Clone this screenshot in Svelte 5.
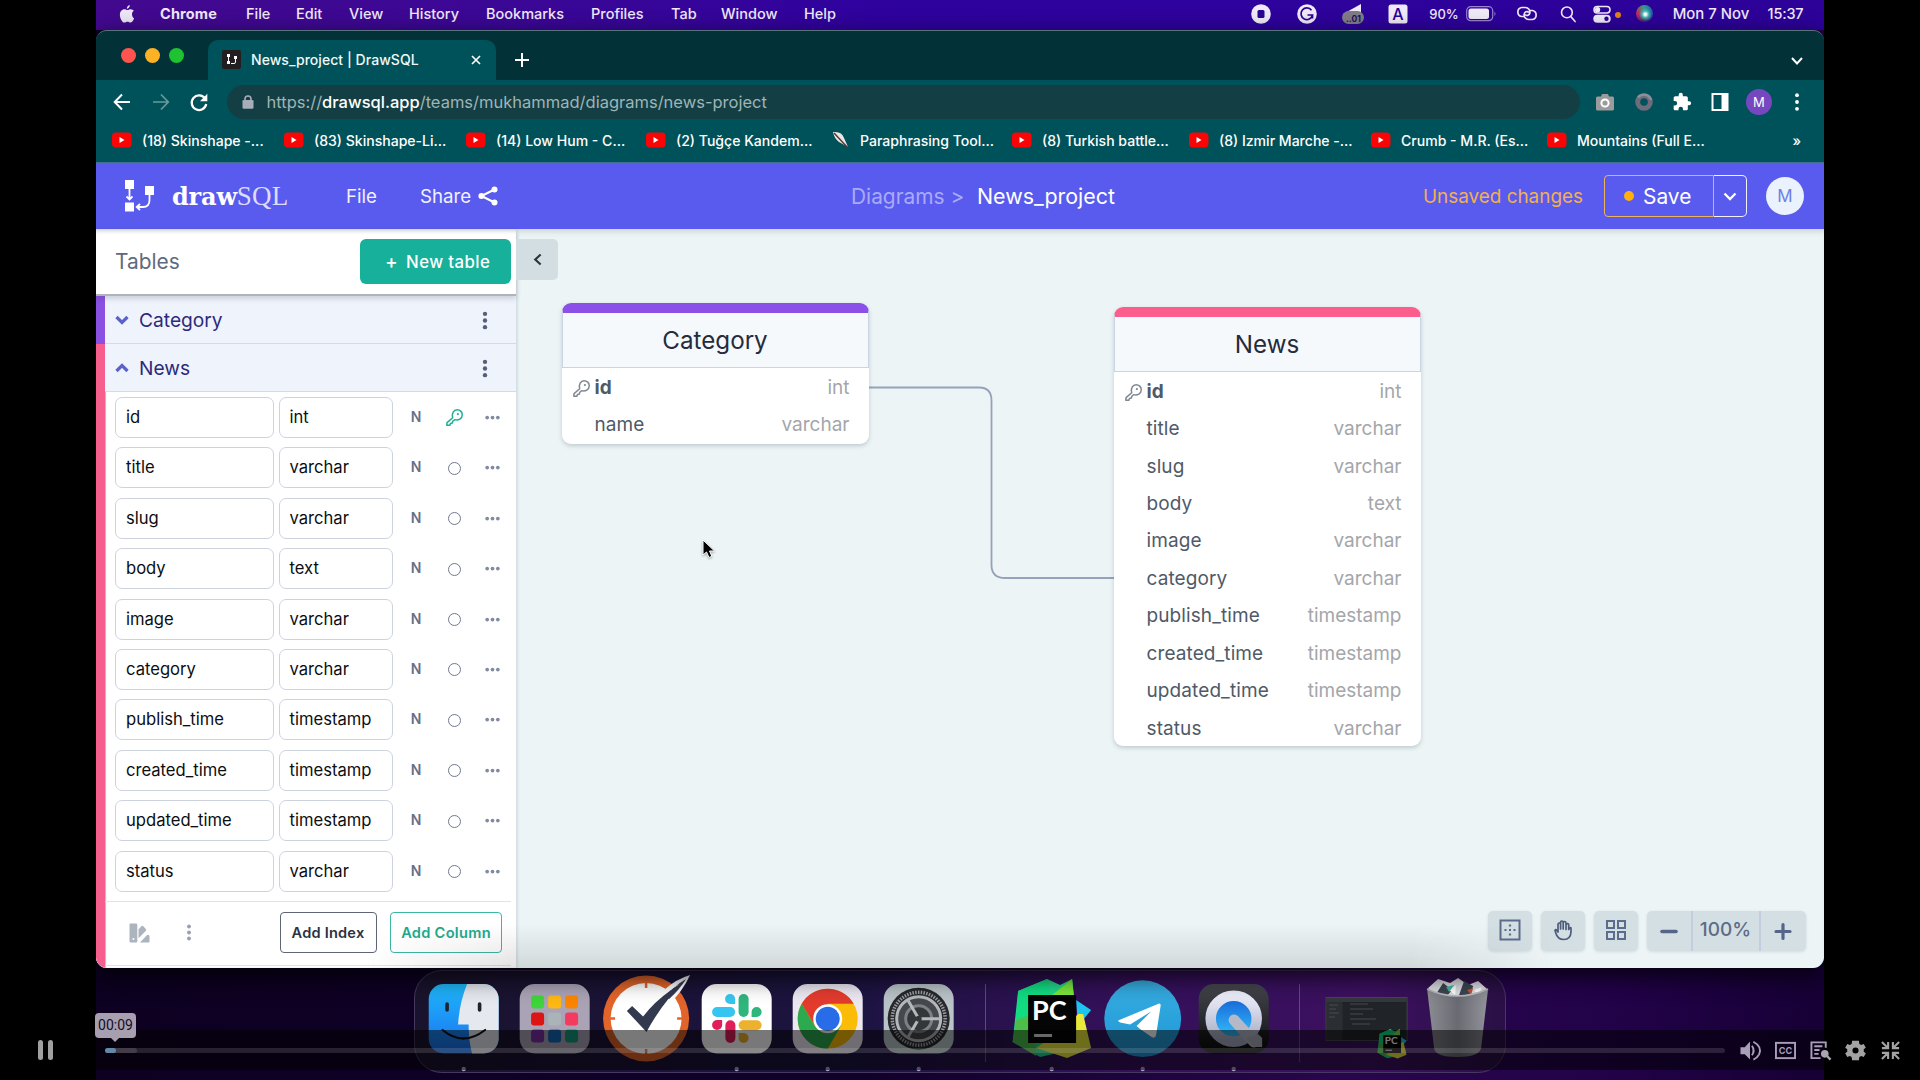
<script>
  const menus = [
    ['File', 50], ['Edit', 53], ['View', 60], ['History', 77], ['Bookmarks', 105],
    ['Profiles', 80], ['Tab', 50], ['Window', 83], ['Help', 50]
  ];

  const bookmarks = [
    { text: '(18) Skinshape -...', w: 172 },
    { text: '(83) Skinshape-Li...', w: 182 },
    { text: '(14) Low Hum - C...', w: 180 },
    { text: '(2) Tuğçe Kandem...', w: 184 },
    { text: 'Paraphrasing Tool...', w: 182, feather: true },
    { text: '(8) Turkish battle...', w: 177 },
    { text: '(8) Izmir Marche -...', w: 182 },
    { text: 'Crumb - M.R. (Es...', w: 176 },
    { text: 'Mountains (Full E...', w: 180 }
  ];

  const newsColumns = [
    { name: 'id', type: 'int', key: true },
    { name: 'title', type: 'varchar' },
    { name: 'slug', type: 'varchar' },
    { name: 'body', type: 'text' },
    { name: 'image', type: 'varchar' },
    { name: 'category', type: 'varchar' },
    { name: 'publish_time', type: 'timestamp' },
    { name: 'created_time', type: 'timestamp' },
    { name: 'updated_time', type: 'timestamp' },
    { name: 'status', type: 'varchar' }
  ];

  const diagramTables = [
    {
      title: 'Category', kind: 'purple',
      columns: [{ name: 'id', type: 'int', key: true }, { name: 'name', type: 'varchar' }]
    },
    { title: 'News', kind: 'pink', columns: newsColumns }
  ];

  const ticks = Array.from({ length: 60 }, (_, i) => i * 6);
  const pads = ['#3fd43c', '#fdb813', '#fb8500', '#dc1414', '#a9b3b8', '#f43b5e', '#7b2fa8', '#1467b8', '#159a7c'];
</script>

{#snippet key()}
  <svg class="key" viewBox="0 0 16 16" fill="none" stroke="currentColor" stroke-width="1.4" stroke-linejoin="round">
    <path d="M6.300 8.200 1 12.800 .7 15.200 3.600 15.300 4.200 13.600 6 13.200 6.400 11.500 8.300 10C11.500 11 15.300 9 15.300 5.400 15.300 2.700 13 .7 10.500.7 7.200.7 5.200 4.400 6.300 8.200Z" />
    <circle cx="11.200" cy="4.800" r="1" fill="currentColor" stroke="none" />
  </svg>
{/snippet}

{#snippet dots()}
  <svg class="vdots" viewBox="0 0 6 20" fill="currentColor">
    <circle cx="3" cy="3" r="2.3" /><circle cx="3" cy="10" r="2.3" /><circle cx="3" cy="17" r="2.3" />
  </svg>
{/snippet}

{#snippet pycharm()}
  <path d="M12 21 41 9 54 15 66 9 70 44 56 82 34 87 6.500 72Z" fill="#21d789" />
  <path d="M12 21 41 9 46 30 10 62Z" fill="#12dc82" />
  <path d="M46 25 66 9 70 50 54 40Z" fill="#7be83c" />
  <path d="M6.500 72 10 50 26 44 30 86Z" fill="#4cbf4b" />
  <path d="M70 30 85 40 72 56Z" fill="#1cc4ee" />
  <path d="M72 44 77 44 85 78 61 88 30 78 56 60Z" fill="#e9e83c" />
  <rect x="22" y="25" width="48" height="48" fill="#050505" />
  <text x="26" y="49.500" class="pc">PC</text>
  <rect x="28" y="64" width="18" height="3" fill="#ddd" />
{/snippet}

<div class="stage">
  <div class="screen">
    <div class="menubar">
      <svg class="apple" viewBox="0 0 16 19" fill="#ece6f6">
        <path d="M11 0C11 2 9.600 3.900 7.800 4 7.700 2 9.200.4 11 0ZM13.300 9.800C13.300 8 14.200 6.900 15.300 6.200 14.500 5 13.300 4.500 12 4.400 10.600 4.300 9.400 5.200 8.500 5.200 7.700 5.200 6.600 4.400 5.400 4.400 2.500 4.400.5 6.800.5 10.200.5 14.200 3 18.500 5.200 18.500 6.400 18.500 7 17.700 8.500 17.700 10 17.700 10.500 18.500 11.800 18.500 13.600 18.500 15 15.700 15.500 14 14.200 13.400 13.300 11.800 13.300 9.800Z" />
      </svg>
      <b class="appname">Chrome</b>
      {#each menus as [label, width]}
        <span style:width="{width}px">{label}</span>
      {/each}
      <div class="status">
        <svg viewBox="0 0 20 20"><circle cx="10" cy="10" r="9.800" fill="#efe9f8" /><rect x="6.500" y="6" width="7" height="8" rx="1.500" fill="#2a0296" /></svg>
        <svg viewBox="0 0 20 20"><circle cx="10" cy="10" r="9.800" fill="#efe9f8" /><path d="M14.500 6.300A5.800 5.800 0 1 0 15.500 11H10.500M15.500 11V14.500" fill="none" stroke="#2a0296" stroke-width="1.700" /></svg>
        <svg viewBox="0 0 22 22"><path d="M1 10 19 0V10Z" fill="#efe9f8" /><rect x="0" y="7" width="22" height="13" rx="6.500" fill="#7f7c86" /><text x="4" y="17.500" class="mini">..01</text></svg>
        <svg viewBox="0 0 20 20"><rect x=".5" y=".5" width="19" height="19" rx="2.500" fill="#efe9f8" /><text x="10" y="16" class="langa">A</text></svg>
        <span class="pct">90%</span>
        <svg viewBox="0 0 31 16"><rect x=".7" y=".7" width="26" height="14" rx="4" fill="none" stroke="#9a83d2" stroke-width="1.200" /><rect x="2.500" y="2.500" width="20.500" height="10.500" rx="2.500" fill="#efe9f8" /><path d="M28.500 5.500Q30.500 7.800 28.500 10Z" fill="#9a83d2" /></svg>
        <svg viewBox="0 0 22 14" fill="none" stroke="#efe9f8" stroke-width="1.700"><path d="M9 10H5.500A4.600 4.600 0 0 1 5.500 1H9.500A4.600 4.600 0 0 1 13.800 6.500C13.500 8.500 11 10 9 8" /><path d="M13 4H16.500A4.600 4.600 0 0 1 16.500 13H12.500A4.600 4.600 0 0 1 8.200 7.500C8.500 5.500 11 4 13 6" /></svg>
        <svg viewBox="0 0 18 18" fill="none" stroke="#efe9f8" stroke-width="1.700"><circle cx="7.300" cy="7.300" r="5.700" /><path d="M11.500 11.800 16 17" stroke-linecap="round" /></svg>
        <svg viewBox="0 0 18 18"><rect x="1" y="1.500" width="16" height="6.500" rx="3.200" fill="none" stroke="#efe9f8" stroke-width="1.500" /><circle cx="4.600" cy="4.700" r="2.600" fill="#efe9f8" /><rect x=".3" y="9.800" width="17.400" height="8" rx="4" fill="#efe9f8" /><circle cx="13.500" cy="13.800" r="2.200" fill="#2a0296" /></svg>
        <i class="amber"></i>
        <i class="siri"></i>
        <span class="date">Mon 7 Nov</span>
        <span class="clock">15:37</span>
      </div>
    </div>

    <div class="window">
      <div class="tabs">
        <div class="lights"><i></i><i></i><i></i></div>
        <div class="tab">
          <svg class="fav" viewBox="0 0 19 19"><rect width="19" height="19" rx="2" fill="#231f20" /><path d="M5 4h3v3H5zM5 11h3v3H5zM12 6h3v3h-3z" fill="#fff" /><path d="M6.500 7v4M13.500 9v3q0 1.500-1.500 1.500H9" stroke="#fff" fill="none" /></svg>
          <span class="tabtitle">News_project | DrawSQL</span>
          <svg class="x" viewBox="0 0 10 10"><path d="M1 1 9 9M9 1 1 9" stroke="#fff" stroke-width="1.700" /></svg>
        </div>
        <svg class="plus" viewBox="0 0 14 14"><path d="M7 0V14M0 7H14" stroke="#fff" stroke-width="2" /></svg>
        <svg class="down" viewBox="0 0 12 8"><path d="M1 1 6 6.500 11 1" stroke="#fff" stroke-width="2" fill="none" /></svg>
      </div>

      <div class="toolbar">
        <svg viewBox="0 0 18 18" fill="none" stroke="#fff" stroke-width="2"><path d="M17 9H2M9 1.500 1.700 9 9 16.500" /></svg>
        <svg viewBox="0 0 18 18" fill="none" stroke="#6b999c" stroke-width="1.700"><path d="M1 9H16M9 1.500 16.300 9 9 16.500" /></svg>
        <svg viewBox="0 0 18 18"><path d="M15 5.500A7.300 7.300 0 1 0 16.200 11" fill="none" stroke="#fff" stroke-width="2.200" /><path d="M17.300.8V8.200H10Z" fill="#fff" /></svg>
        <div class="address">
          <svg viewBox="0 0 12 14"><rect x=".5" y="5" width="11" height="8.800" rx="1.300" fill="#a7adb9" /><path d="M3 6V4A3 3 0 0 1 9 4V6" fill="none" stroke="#a7adb9" stroke-width="1.600" /></svg>
          <span>https://<b>drawsql.app</b>/teams/mukhammad/diagrams/news-project</span>
        </div>
        <div class="ext">
          <svg viewBox="0 0 18 18"><path d="M6 1H12L13 3.500H16.500Q18 3.500 18 5V16Q18 17.500 16.500 17.500H1.500Q0 17.500 0 16V5Q0 3.500 1.500 3.500H5Z" fill="#9b9b9b" /><circle cx="9" cy="10" r="3.600" fill="none" stroke="#fff" stroke-width="2" /></svg>
          <svg viewBox="0 0 18 18"><circle cx="9" cy="9" r="6.300" fill="none" stroke="#6c6c7b" stroke-width="5" /><path d="M3 4.500A7.500 7.500 0 0 1 16 7" fill="none" stroke="#8d8d9b" stroke-width="2.500" /></svg>
          <svg viewBox="0 0 24 24" fill="#fff"><path d="M20.500 11H19V7c0-1.100-.9-2-2-2h-4V3.500a2.500 2.500 0 0 0-5 0V5H4c-1.100 0-2 .9-2 2v3.800h1.500a2.700 2.700 0 0 1 0 5.400H2V20c0 1.100.9 2 2 2h3.800v-1.500a2.700 2.700 0 0 1 5.400 0V22H17c1.100 0 2-.9 2-2v-4h1.500a2.500 2.500 0 0 0 0-5z" /></svg>
          <svg viewBox="0 0 18 18"><rect x="1.500" y="1" width="15" height="16" fill="none" stroke="#fff" stroke-width="2" /><rect x="10.500" y="1" width="6" height="16" fill="#fff" /></svg>
          <span class="me">M</span>
          <svg viewBox="0 0 18 18" fill="#fff"><circle cx="9" cy="2.200" r="1.900" /><circle cx="9" cy="9" r="1.900" /><circle cx="9" cy="15.800" r="1.900" /></svg>
        </div>
      </div>

      <div class="bookmarks">
        {#each bookmarks as b}
          <div class="bm" style:width="{b.w}px">
            {#if b.feather}
              <svg viewBox="0 0 20 16"><path d="M3 0Q12-1 14 6L18 15 9 10Q4 6 3 0Z" fill="#efe5e2" /><path d="M4 1 18 16" stroke="#4b3436" stroke-width="1.400" /></svg>
            {:else}
              <svg viewBox="0 0 20 16"><rect y=".5" width="19.500" height="15" rx="4" fill="#f90505" /><path d="M7.500 5 12.500 8 7.500 11Z" fill="#fff" /></svg>
            {/if}
            <span>{b.text}</span>
          </div>
        {/each}
        <span class="more">»</span>
      </div>

      <header>
        <svg class="logo" viewBox="0 0 32 34"><path d="M1 1H10V10H1ZM1 23.500H10V32.500H1ZM21 7H30V16H21Z" fill="#fff" /><path d="M5.500 10V21M2.500 17.500 5.500 20.500 8.500 17.500M25.500 16V21Q25.500 28 19 28H13M16 25 12.700 28 16 31" fill="none" stroke="#fff" stroke-width="1.800" /></svg>
        <div class="brand"><b>draw</b><span>SQL</span></div>
        <span class="hfile">File</span>
        <span class="hshare">Share</span>
        <svg class="share" viewBox="0 0 20 20" fill="#fff"><path d="M16.500 3.500 3.500 10 16.500 16.500" fill="none" stroke="#fff" stroke-width="2.200" /><circle cx="16.500" cy="3.400" r="3" /><circle cx="3.400" cy="10" r="3" /><circle cx="16.500" cy="16.600" r="3" /></svg>
        <span class="crumb">Diagrams &gt;</span>
        <span class="project">News_project</span>
        <span class="unsaved">Unsaved changes</span>
        <div class="save"><i></i><span>Save</span></div>
        <div class="savemore"><svg viewBox="0 0 14 9"><path d="M1.500 1.500 7 7 12.500 1.500" fill="none" stroke="#fff" stroke-width="2.300" /></svg></div>
        <span class="avatar">M</span>
      </header>

      <main>
        <aside>
          <div class="sidehead"><span>Tables</span><button><i>+</i>New table</button></div>
          <div class="group purple">
            <div class="grouphead">
              <svg class="chev" viewBox="0 0 14 10"><path d="M1.500 2 7 7.500 12.500 2" fill="none" stroke="#5b62c9" stroke-width="3.200" /></svg>
              <span>Category</span>{@render dots()}
            </div>
          </div>
          <div class="group pink">
            <div class="grouphead">
              <svg class="chev" viewBox="0 0 14 10"><path d="M1.500 8 7 2.500 12.500 8" fill="none" stroke="#5b62c9" stroke-width="3.200" /></svg>
              <span>News</span>{@render dots()}
            </div>
            <div class="fields">
              {#each newsColumns as c}
                <div class="field">
                  <span class="box">{c.name}</span>
                  <span class="box">{c.type}</span>
                  <span class="null">N</span>
                  <span class="idx" class:keyed={c.key}>{#if c.key}{@render key()}{:else}<i></i>{/if}</span>
                  <svg class="hdots" viewBox="0 0 16 5" fill="#808ba1"><circle cx="2.300" cy="2.500" r="2" /><circle cx="8" cy="2.500" r="2" /><circle cx="13.700" cy="2.500" r="2" /></svg>
                </div>
              {/each}
            </div>
            <div class="groupfoot">
              <svg class="palette" viewBox="0 0 22 21" fill="#abb4bf"><path d="M1.500.5H7.500Q8.700.5 8.700 1.700V19.300Q8.700 20.500 7.500 20.500H1.700Q.5 20.500.5 19.300V1.700Q.5.5 1.500.5ZM10 6.500 13 3.300Q14 2.500 15 3.500L17.700 6.200Q18.500 7.200 17.700 8.200L10 16ZM11.500 20.500 19 12.500H20.500Q21.500 12.500 21.500 13.700V19.300Q21.500 20.500 20.500 20.500Z" /><circle cx="4.600" cy="16.800" r="1.100" fill="#fff" /></svg>
              {@render dots()}
              <button class="addindex">Add Index</button>
              <button class="addcol">Add Column</button>
            </div>
          </div>
        </aside>

        <div class="canvas">
          <div class="collapse"><svg viewBox="0 0 10 14"><path d="M8.500 1.500 2.500 7 8.500 12.500" fill="none" stroke="#2d3440" stroke-width="2.400" /></svg></div>
          <svg class="link" viewBox="0 0 246 194"><path d="M0 1.500H110Q122.500 1.500 122.500 14.500V179Q122.500 192 136 192H246" fill="none" stroke="#94a2bb" stroke-width="1.800" /></svg>
          {#each diagramTables as t}
            <div class="table {t.kind}">
              <div class="ttitle">{t.title}</div>
              {#each t.columns as c}
                <div class="trow" class:primary={c.key}>
                  <span class="slot">{#if c.key}{@render key()}{/if}</span>
                  <span class="cname">{c.name}</span>
                  <span class="ctype">{c.type}</span>
                </div>
              {/each}
            </div>
          {/each}
          <svg class="cursor" viewBox="0 0 14 20"><path d="M1 1V16L4.500 13 7 18.500 9.800 17.300 7.500 12H12.500Z" fill="#000" stroke="#fff" stroke-width="1" /></svg>
          <div class="tools">
            <span class="tool"><svg viewBox="0 0 22 22" fill="none" stroke="#5c6c8c" stroke-width="2"><rect x="1.500" y="1.500" width="19" height="19" /><path d="M5.500 11H7.500M10 11H12M14.500 11H16.500M11 5.500V7.500M11 14.500V16.500" stroke-width="2.200" /></svg></span>
            <span class="tool"><svg viewBox="0 0 22 22" fill="none" stroke="#4e5d7c" stroke-width="1.700" stroke-linecap="round" stroke-linejoin="round"><path d="M6 13V5.500Q6 4 7.300 4T8.600 5.500V10M8.600 5V3.300Q8.600 2 9.900 2T11.200 3.300V10M11.200 4Q11.500 2.500 12.700 2.500T14 4V10.500M14 6Q14.200 4.600 15.500 4.600T16.700 6.200V10.500L17.500 9Q18.500 8 19 9V13Q18.500 20.500 12 20.500 5.500 20.500 3.800 14L3 11.500Q3.500 10 4.700 11.200L6 13" /></svg></span>
            <span class="tool"><svg viewBox="0 0 22 22" fill="none" stroke="#5c6c8c" stroke-width="2"><path d="M2 2H9V9H2ZM13 2H20V9H13ZM2 13H9V20H2ZM13 13H20V20H13Z" /></svg></span>
            <div class="zoom">
              <svg viewBox="0 0 18 18"><path d="M2 9.500H16" stroke="#55658a" stroke-width="3.600" stroke-linecap="round" /></svg>
              <span>100%</span>
              <svg viewBox="0 0 18 18"><path d="M2 9.500H16M9 2.500V16.500" stroke="#55658a" stroke-width="3.200" stroke-linecap="round" /></svg>
            </div>
          </div>
        </div>
      </main>
      <div class="shade"></div>
    </div>

    <div class="dockarea">
      <div class="dock">
        <svg viewBox="0 0 91 103">
          <defs>
            <linearGradient id="fb" x1="0" y1="0" x2="0" y2="1"><stop offset="0" stop-color="#1fb9fb" /><stop offset="1" stop-color="#1a6ff0" /></linearGradient>
            <linearGradient id="tg" x1="0" y1="0" x2="0" y2="1"><stop offset="0" stop-color="#37aee2" /><stop offset="1" stop-color="#1e96d4" /></linearGradient>
            <linearGradient id="qt" x1="0" y1="0" x2="0" y2="1"><stop offset="0" stop-color="#46484f" /><stop offset="1" stop-color="#0b0b0d" /></linearGradient>
            <linearGradient id="ring" x1="0" y1="0" x2="0" y2="1"><stop offset="0" stop-color="#eceefa" /><stop offset="1" stop-color="#a3a8c0" /></linearGradient>
            <linearGradient id="bin" x1="0" y1="0" x2="1" y2="0"><stop offset="0" stop-color="#8c8c93" /><stop offset=".5" stop-color="#6a6b72" /><stop offset="1" stop-color="#93949b" /></linearGradient>
            <linearGradient id="qb" x1="0" y1="0" x2="0" y2="1"><stop offset="0" stop-color="#1660d8" /><stop offset="1" stop-color="#36c8fc" /></linearGradient>
            <clipPath id="tile"><rect x="10.600" y="14" width="70" height="69.500" rx="15" /></clipPath>
          </defs>
          <g clip-path="url(#tile)">
            <rect x="10" y="14" width="72" height="70" fill="url(#fb)" />
            <path d="M49 14Q41 34 40 54.500H50.500Q50.500 70 54 84H82V14Z" fill="#e6e8f0" />
          </g>
          <path d="M29 34V40M61.500 34V40" stroke="#1c2430" stroke-width="3.600" stroke-linecap="round" />
          <path d="M24.500 60Q45 77 67 60" fill="none" stroke="#101318" stroke-width="2.200" stroke-linecap="round" />
          <circle class="run" cx="45.600" cy="99" r="2.200" />
        </svg>
        <svg viewBox="0 0 91 103">
          <rect x="10.600" y="14" width="70" height="69.500" rx="15" fill="#aaa3b6" />
          {#each pads as p, i}
            <rect x={22 + (i % 3) * 17} y={25.500 + Math.floor(i / 3) * 17} width="13" height="13" rx="3" fill={p} />
          {/each}
        </svg>
        <svg viewBox="0 0 91 103">
          <circle cx="46" cy="48.500" r="43" fill="#e2642a" /><circle cx="46" cy="48.500" r="35.500" fill="#fff" />
          <path d="M46 12V18M46 79V85M10 48.500H15M77 48.500H82" stroke="#e2642a" stroke-width="2.500" />
          <path d="M90 5Q76 9 64 20L70 33Q82 22 90 5Z" fill="#fff" />
          <path d="M69 28Q56 44 46.400 62L26.800 41 32 36 43 46.500Q54 32 71 20Z" fill="#333a50" />
          <path d="M86 9Q72 17 64 28L69 29Q79 20 86 9Z" fill="#333a50" />
          <path d="M73 17 68 21 80 14Z" fill="#fff" />
        </svg>
        <svg viewBox="0 0 91 103">
          <rect x="10.600" y="14" width="70" height="69.500" rx="15" fill="#fff" />
          <g stroke-width="10" stroke-linecap="round">
            <path d="M52.500 29V42" stroke="#2eb67d" /><path d="M65.500 55.200H52.500" stroke="#ecb22e" /><path d="M39.300 68V55.200" stroke="#e01e5a" /><path d="M26 42H39" stroke="#36c5f0" />
          </g>
          <path d="M44 34V29A5 5 0 1 0 39 34Z" fill="#36c5f0" /><path d="M60.500 47H65.500A5 5 0 1 0 60.500 42Z" fill="#2eb67d" /><path d="M47.500 63V68A5 5 0 1 0 52.500 63Z" fill="#ecb22e" /><path d="M31 50H26A5 5 0 1 0 31 55Z" fill="#e01e5a" />
          <circle class="run" cx="45.600" cy="99" r="2.200" />
        </svg>
        <svg viewBox="0 0 91 103">
          <rect x="10.600" y="14" width="70" height="69.500" rx="15" fill="#ece8f2" />
          <circle cx="45.600" cy="48.700" r="30" fill="#fbbc08" />
          <path d="M45.600 48.700 19.600 33.700A30 30 0 0 1 71.600 33.700H45.600Z" fill="#e33b2e" />
          <path d="M19.600 33.700A30 30 0 0 0 45.600 78.700L58.600 56.200 32.600 56.200Z" fill="#2da94f" />
          <path d="M19.600 33.700 34 58 45 40Z" fill="#e33b2e" />
          <path d="M19.600 33.700 32.600 56.200 45.600 63 40 70 20 55Z" fill="#2da94f" />
          <circle cx="45.600" cy="48.700" r="14.500" fill="#fff" /><circle cx="45.600" cy="48.700" r="12" fill="#286ce8" />
          <circle class="run" cx="45.600" cy="99" r="2.200" />
        </svg>
        <svg viewBox="0 0 91 103">
          <rect x="10.600" y="14" width="70" height="69.500" rx="15" fill="#b9c3c8" />
          <circle cx="45.600" cy="48.700" r="31" fill="#26282b" />
          {#each ticks as a}
            <path d="M45.600 20.500V24" stroke="#9a9da1" stroke-width="1.500" transform="rotate({a} 45.600 48.700)" />
          {/each}
          <circle cx="45.600" cy="48.700" r="22" fill="#45484c" stroke="#b4b8bb" stroke-width="3" />
          <circle cx="45.600" cy="48.700" r="13" fill="#34373a" stroke="#7d8185" stroke-width="3" />
          <path d="M45.600 48.700H67M45.600 48.700 35 30.500M45.600 48.700 35 67" stroke="#b4b8bb" stroke-width="3" />
          <circle cx="45.600" cy="48.700" r="3" fill="#34373a" />
          <circle class="run" cx="45.600" cy="99" r="2.200" />
        </svg>
        <i class="sep"></i>
        <svg viewBox="0 0 91 103">{@render pycharm()}<circle class="run" cx="45.600" cy="99" r="2.200" /></svg>
        <svg viewBox="0 0 91 103">
          <circle cx="45.600" cy="48.700" r="38.400" fill="url(#tg)" />
          <path d="M21 50.500 62 33.500Q64 33.500 63.500 36L59 65Q58 69 54.500 67L43 59 39.500 56 54 41.500 33 54.500 23 52.500Q21.500 52 21 50.500Z" fill="#fff" />
          <circle class="run" cx="45.600" cy="99" r="2.200" />
        </svg>
        <svg viewBox="0 0 91 103">
          <rect x="10.600" y="14" width="70" height="69.500" rx="15" fill="url(#qt)" />
          <circle cx="45.600" cy="48.700" r="23" fill="url(#qb)" stroke="url(#ring)" stroke-width="10.500" />
          <path d="M46 50 66 72" stroke="#b5b8c6" stroke-width="11" stroke-linecap="round" /><path d="M58 68 70 64 74 68V77H66Z" fill="#a9acba" />
          <circle class="run" cx="45.600" cy="99" r="2.200" />
        </svg>
        <i class="sep"></i>
        <svg viewBox="0 0 91 103">
          <rect x="5" y="27.500" width="81" height="43" fill="#202327" stroke="#44474c" />
          <rect x="5.500" y="28" width="80" height="4" fill="#34373b" /><rect x="5.500" y="32" width="16" height="38" fill="#2b2e32" />
          <path d="M8 35H17M8 39H15M8 43H18M8 47H14M29 34H47M29 39H52M29 44H42M29 49H55M31 54H49" stroke="#474c53" stroke-width="1" />
          <g transform="translate(54 56) scale(.37)">{@render pycharm()}</g>
        </svg>
        <svg viewBox="0 0 91 103">
          <path d="M16 18 26 9 38 13 46 8 56 15 66 11 75 19 72 28H20Z" fill="#dcdde3" />
          <path d="M24 24 31 13 40 20 34 27ZM47 25 52 11 61 16 58 27Z" fill="#3c4650" /><path d="M37 20 44 15 43 25ZM62 20 70 17 66 26Z" fill="#fff" /><path d="M34 17 42 15 37 22Z" fill="#3fb7a2" /><path d="M55 20 61 18 59 25Z" fill="#c3543a" />
          <path d="M15 19Q45 33 76 19L69 78Q67 87 45 87T22 78Z" fill="url(#bin)" />
          <path d="M15 19Q45 33 76 19" fill="none" stroke="#b7b8bf" stroke-width="1.500" />
        </svg>
      </div>
    </div>
  </div>

  <div class="player">
    <div class="pause"><i></i><i></i></div>
    <div class="track"><i class="buffered"></i><i class="played"></i><span class="tip">00:09</span></div>
    <div class="controls">
      <svg viewBox="0 0 22 22"><path d="M.5 7.500H5L10.500 1.500V20.500L5 15H.5Z" fill="#a99fb6" /><path d="M12.500 6Q16 11 12.500 16M14 1.800Q23.500 7 20 15Q18 19 14 20.500" fill="none" stroke="#a99fb6" stroke-width="2" /></svg>
      <svg viewBox="0 0 22 22"><rect x="1" y="3" width="20" height="16" fill="none" stroke="#a99fb6" stroke-width="2" /><text x="11" y="14.500" class="cc">CC</text></svg>
      <svg viewBox="0 0 22 22"><path d="M16.500 8V2.500H1.500V19H11" fill="none" stroke="#a99fb6" stroke-width="2" /><path d="M4.500 6.500H13M4.500 10.500H10M4.500 14.500H9" stroke="#a99fb6" stroke-width="2" /><circle cx="15.500" cy="14.500" r="4" fill="#a9a5ae" /><path d="M17.500 16.500 21.500 20.500" stroke="#a9a5ae" stroke-width="2.500" /></svg>
      <svg viewBox="0 0 24 24" fill="#a3a3a3"><path d="M21.400 13.300a9 9 0 0 0 0-2.600l2.400-1.900-2.400-4.200-2.900 1.100a9 9 0 0 0-2.100-1.200L15.900.8H8.100l-.5 3.700a9 9 0 0 0-2.100 1.200L2.600 4.600.2 8.800l2.400 1.900a9 9 0 0 0 0 2.600L.2 15.200l2.400 4.200 2.900-1.100a9 9 0 0 0 2.100 1.200l.5 3.700h7.800l.5-3.700a9 9 0 0 0 2.100-1.200l2.900 1.100 2.400-4.200zM12 15.500a3.500 3.500 0 1 1 0-7 3.500 3.500 0 0 1 0 7z" /></svg>
      <svg viewBox="0 0 22 22" fill="none" stroke="#a3a3a3" stroke-width="2.200"><path d="M2 2 8 8M8.500 2V8.500H2M20 2 14 8M13.500 2V8.500H20M2 20 8 14M8.500 20V13.500H2M20 20 14 14M13.500 20V13.500H20" /></svg>
    </div>
  </div>
</div>

<style>
  :global(body) { margin: 0; background: #000; }
  .stage { position: relative; width: 1920px; height: 1080px; overflow: hidden; background: #000; font-family: Inter, "Liberation Sans", sans-serif; }
  .stage * { box-sizing: border-box; }
  svg { display: block; overflow: visible; flex: none; }
  span, b { white-space: nowrap; flex: none; }
  .screen { width: 1728px; height: 1080px; margin-left: 96px; display: flex; flex-direction: column; background: linear-gradient(100deg, #0d001f 0%, #10012a 50%, #28064e 75%, #220249 88%, #160034 100%); }

  .menubar { height: 30px; flex: none; display: flex; align-items: center; padding: 0 0 3px 23px; font-size: 14.500px; font-weight: 500; color: #efe9f8; background: linear-gradient(90deg, #42098e, #3a0796 25%, #2f029e 45%, #2c0299); }
  .apple { width: 16px; height: 18px; margin-right: 25px; }
  .appname { width: 86px; font-weight: 700; letter-spacing: .15px; }
  .status { margin-left: auto; height: 27px; display: grid; align-items: center; justify-items: center; grid-template-columns: 46px 46px 45px 46px 46px 29px 62px 32px 23px 10px 42px 92px 57px; margin-right: 10px; }
  .status svg { width: 20px; height: 20px; }
  .status svg:nth-child(3) { width: 22px; height: 22px; margin-top: 2px; }
  .status svg:nth-child(6) { width: 31px; height: 16px; }
  .status svg:nth-child(7) { width: 22px; height: 15px; }
  .status svg:nth-child(8) { width: 17px; height: 18px; justify-self: start; margin-left: 2px; }
  .status svg:nth-child(9) { width: 18px; height: 18px; }
  .mini { font: 700 8.500px Inter, sans-serif; fill: #241060; }
  .langa { font: 500 16px Inter, sans-serif; fill: #2a0296; text-anchor: middle; }
  .pct { font-size: 13px; }
  .date { font-size: 14.900px; }
  .clock { letter-spacing: -.2px; }
  .amber { width: 6px; height: 6px; border-radius: 50%; background: #e0801c; margin-top: 2px; }
  .siri { width: 17px; height: 17px; border-radius: 50%; background: radial-gradient(circle at 55% 55%, #fff 0 8%, #45b8b4 25%, transparent 50%), conic-gradient(#2a9a8c, #2555a8, #40296e, #c42a5c, #35a07f); }

  .window { height: 938px; flex: none; display: flex; flex-direction: column; border-radius: 11px; overflow: hidden; background: #00525a; position: relative; z-index: 1; box-shadow: 0 8px 24px rgba(0, 0, 0, .8); border-top: 1px solid #56747a; }
  .tabs { height: 49px; flex: none; display: flex; align-items: center; background: #023237; }
  .lights { display: flex; gap: 9.200px; width: 112px; padding-left: 24.500px; align-self: flex-start; padding-top: 17px; }
  .lights i { width: 15px; height: 15px; border-radius: 50%; background: #fe544e; }
  .lights i:nth-child(2) { background: #fdb225; }
  .lights i:nth-child(3) { background: #1fc231; }
  .tab { width: 288px; height: 40px; align-self: flex-end; display: flex; align-items: center; padding: 0 0 1px 14px; border-radius: 10px 10px 0 0; background: #00525a; color: #f2f8f8; font-size: 14px; font-weight: 500; }
  .fav { width: 19px; height: 19px; margin-right: 10px; }
  .tabtitle { width: 220px; letter-spacing: .05px; }
  .x { width: 10px; height: 10px; }
  .plus { width: 14px; height: 14px; margin-left: 19px; margin-top: 9px; }
  .down { width: 12px; height: 8px; margin-left: auto; margin-right: 21px; margin-top: 10px; }
  .toolbar { height: 43px; flex: none; display: flex; align-items: center; padding-left: 17px; }
  .toolbar > svg { width: 18px; height: 18px; margin-right: 20.500px; }
  .address { width: 1353px; height: 34px; display: flex; align-items: center; padding-left: 15px; margin-left: -2px; border-radius: 17px; background: #133f44; color: #9fb4b7; font-size: 16.500px; }
  .address svg { width: 12px; height: 14px; margin-right: 13px; }
  .address b { color: #fff; font-weight: 500; }
  .ext { display: grid; grid-template-columns: repeat(6, 38.400px); justify-items: center; align-items: center; margin-left: 6.500px; }
  .ext svg { width: 18px; height: 18px; }
  .ext svg:nth-child(3) { width: 20px; height: 20px; }
  .me { width: 26px; height: 26px; line-height: 26px; text-align: center; border-radius: 50%; background: #7747c0; color: #fff; font-size: 13px; }
  .bookmarks { height: 40px; flex: none; display: flex; align-items: center; padding: 0 0 5px 16px; color: #fff; font-size: 14.050px; font-weight: 500; border-bottom: 1px solid #3f6f93; }
  .bm { display: flex; align-items: center; flex: none; }
  .bm svg { width: 20px; height: 16px; margin-right: 10px; }
  .more { margin-left: auto; margin-right: 23px; }

  header { height: 66px; flex: none; display: flex; align-items: center; padding-left: 28px; background: #595bee; color: #f2f2ff; font-size: 18.700px; }
  .logo { width: 32px; height: 34px; }
  .brand { width: 190px; padding-left: 16px; display: flex; align-items: baseline; color: #fff; font-size: 24px; }
  .brand b { font: 700 24px "DejaVu Serif", serif; letter-spacing: -.2px; }
  .brand span { font: 400 27px "Liberation Serif", serif; color: #dcdcff; letter-spacing: .2px; }
  .hfile { width: 74px; }
  .hshare { width: 58px; }
  .share { width: 20px; height: 20px; }
  .crumb { margin-left: 353px; width: 126px; font-size: 20.900px; color: #a9abf9; }
  .project { font-size: 21.400px; color: #fff; width: 446px; }
  .unsaved { width: 181px; color: #f2b04e; font-size: 18.900px; }
  .save { width: 110px; height: 42px; display: flex; align-items: center; padding-left: 19px; border: 1.500px solid #efb25c; border-radius: 4px 0 0 4px; font-size: 20.900px; color: #fff; }
  .save i { width: 10px; height: 10px; border-radius: 50%; background: #ffb00f; margin-right: 9px; }
  .savemore { width: 33px; height: 42px; display: grid; place-items: center; border: 1.500px solid #f1f1ff; border-left: 0; border-radius: 0 5px 5px 0; }
  .savemore svg { width: 14px; height: 9px; }
  .avatar { width: 38px; height: 38px; line-height: 38px; margin-left: 19px; text-align: center; border-radius: 50%; background: #e9f2fd; color: #6f7fe6; font-size: 17px; }

  main { flex: 1; min-height: 0; display: flex; background: #ecf4f5; }
  aside { width: 420px; flex: none; display: flex; flex-direction: column; background: #fff; box-shadow: 1px 0 3px rgba(70, 90, 120, .2); }
  .sidehead { height: 67px; flex: none; display: flex; align-items: center; justify-content: space-between; padding: 0 5px 0 19px; position: relative; color: #5f6a7d; font-size: 20.900px; border-bottom: 2px solid #aeb3bc; box-shadow: inset 0 5px 5px -4px #bbb, 0 3px 5px rgba(60, 70, 100, .2); }
  .sidehead button { width: 151px; height: 45px; display: flex; align-items: center; padding: 0 0 0 25px; border: 0; border-radius: 6px; background: #16b09b; color: #fff; font: 500 16.800px Inter, sans-serif; letter-spacing: .4px; }
  .sidehead button i { font-style: normal; font-size: 19px; margin-right: 8px; }
  .group { border-left: 9px solid #8a50e2; box-shadow: inset 1px 0 1px #bbb; }
  .group.pink { border-left-color: #f65f8d; flex: 1; display: flex; flex-direction: column; }
  .grouphead { height: 48px; flex: none; display: flex; align-items: center; background: #eff3fb; border-bottom: 1.500px solid #d3dbe8; color: #2d2a7c; font-size: 19.200px; padding: 1px 0 0 10px; }
  .grouphead span { width: 338px; }
  .chev { width: 14px; height: 10px; margin-right: 10px; }
  .vdots { width: 6px; height: 19px; color: #566179; }
  .grouphead .vdots { margin-left: 5px; }
  .fields { height: 509px; padding: 5px 0 0 10px; flex: none; }
  .field { height: 50.400px; display: grid; grid-template-columns: 159px 114px 38px 29px 47px; column-gap: 4.500px; align-items: start; }
  .box { height: 41px; border: 1.500px solid #cdd3de; border-radius: 7px; padding-left: 10px; line-height: 39px; font-size: 16.600px; color: #0c0e12; }
  .null { height: 41px; line-height: 39px; text-align: center; font-size: 14px; font-weight: 600; color: #667089; }
  .idx { height: 41px; display: grid; place-items: center; color: #7b8398; }
  .idx i { width: 13px; height: 13px; margin-top: 1px; border: 1.500px solid #6f7890; border-radius: 50%; }
  .keyed { color: #1fae94; }
  .key { width: 17px; height: 17px; }
  .hdots { width: 15px; height: 5px; margin: 18px 0 0 11.500px; }
  .groupfoot { height: 65px; margin-right: 5px; display: flex; align-items: center; border-top: 1.500px solid #dfe3ec; border-bottom: 1.500px solid #dfe3ec; padding: 0 0 2px 24px; }
  .palette { width: 21px; height: 20px; margin-right: 36px; }
  .groupfoot .vdots { width: 6px; height: 17px; color: #98a1b0; margin-right: 87.500px; }
  .groupfoot button { height: 41px; padding: 0; border: 1.500px solid #5e6675; border-radius: 4px; background: transparent; color: #2b3242; font: 600 14.600px Inter, sans-serif; letter-spacing: .2px; white-space: nowrap; }
  .addindex { width: 97px; margin-right: 13.500px; }
  .groupfoot .addcol { width: 112px; border-color: #3bb7a2; color: #20a98f; letter-spacing: .3px; }

  .canvas { flex: 1; position: relative; box-shadow: inset 0 6px 6px -4px #c9cfd0; }
  .collapse { width: 42px; height: 41px; margin-top: 10px; display: grid; place-items: center; background: #d3dee3; border-radius: 0 5px 5px 0; }
  .collapse svg { width: 9px; height: 13px; }
  .table { position: absolute; width: 307px; background: #fff; border-radius: 9px; box-shadow: 0 2px 4px rgba(80, 100, 120, .28); overflow: hidden; }
  .table.purple { left: 45.500px; top: 74px; height: 141px; }
  .table.pink { left: 597.500px; top: 78px; height: 439px; }
  .ttitle { height: 65px; border: 1.500px solid #cbd5e2; border-top: 10px solid #8a50e8; background: #f6f9fc; text-align: center; line-height: 55px; font-size: 24.200px; color: #252c3b; }
  .pink .ttitle { border-top-color: #fb5d8d; }
  .trow { height: 37.450px; display: flex; align-items: center; padding: 1px 19px 0 11px; font-size: 19px; color: #4f5a68; }
  .slot { width: 22px; color: #7f8791; padding-top: 2px; }
  .cname { letter-spacing: .1px; }
  .ctype { margin-left: auto; color: #a4a6aa; }
  .primary .cname { font-weight: 700; }
  .link { position: absolute; left: 353px; top: 157px; width: 246px; height: 194px; }
  .cursor { position: absolute; left: 186px; top: 310px; width: 14px; height: 20px; filter: drop-shadow(0 1px 1px rgba(0, 0, 0, .35)); }
  .shade { position: absolute; left: 270px; right: 270px; bottom: 0; height: 44px; pointer-events: none; background: linear-gradient(transparent, rgba(60, 60, 60, .15)); mask-image: linear-gradient(90deg, transparent, #000 12%, #000 88%, transparent); }
  .tools { position: absolute; right: 18.500px; bottom: 17.500px; display: flex; gap: 9px; }
  .tool, .zoom { height: 40px; border-radius: 5px; background: #d4dfe4; box-shadow: 0 1px 3px rgba(100, 120, 150, .2); }
  .tool { width: 44px; display: grid; place-items: center; padding-bottom: 2px; }
  .tool svg { width: 22px; height: 22px; }
  .zoom { width: 159px; display: grid; grid-template-columns: 44px 70px 45px; place-items: center; }
  .zoom svg { width: 18px; height: 18px; }
  .zoom span { width: 70px; height: 40px; line-height: 38px; text-align: center; border: solid #c3cddd; border-width: 0 2px; color: #5c6c86; font-size: 19px; font-weight: 500; }

  .dockarea { flex: 1; padding: 2px 0 0 318px; }
  .dock { width: 1092px; height: 103px; padding-left: 2.500px; display: flex; border: 1px solid #47385f; border-radius: 28px; background: linear-gradient(90deg, #1a132d, #1c1440 40%, #34105a 65%, #3c1060 88%, #2a1046); }
  .dock svg { width: 91.200px; height: 103px; margin-top: -1px; }
  .sep { width: 1px; height: 78px; margin: 13px 20.100px 0; background: #5c4c7c; }
  .run { fill: #a99fc4; }
  .pc { font: 700 27px Lato, sans-serif; fill: #fff; }

  .player { position: absolute; left: 0; right: 0; bottom: 10px; height: 40px; background: rgba(0, 0, 0, .53); display: flex; align-items: center; padding-left: 38px; }
  .pause { width: 67px; display: flex; gap: 5px; }
  .pause i { width: 5px; height: 20px; border-radius: 2.500px; background: #a0a0a0; }
  .track { position: relative; width: 1620px; height: 5px; border-radius: 3px; background: rgba(255, 255, 255, .13); }
  .buffered, .played { position: absolute; left: 0; top: 0; height: 5px; border-radius: 3px; width: 32px; background: rgba(255, 255, 255, .13); }
  .played { width: 11px; background: #6488a8; }
  .tip { position: absolute; left: -10px; top: -35px; width: 41px; height: 25px; text-align: center; border-radius: 4px; background: #a79fb0; color: #130d24; font: 14px/24px Roboto, sans-serif; }
  .tip::after { content: ''; position: absolute; left: 16px; top: 25px; border: 4px solid transparent; border-top-color: #a79fb0; border-bottom: 0; }
  .controls { display: grid; grid-template-columns: repeat(5, 34.900px); justify-items: center; margin-left: 8px; }
  .controls svg { width: 21px; height: 21px; }
  .cc { font: 700 9.500px Inter, sans-serif; fill: #a99fb6; text-anchor: middle; }
</style>
